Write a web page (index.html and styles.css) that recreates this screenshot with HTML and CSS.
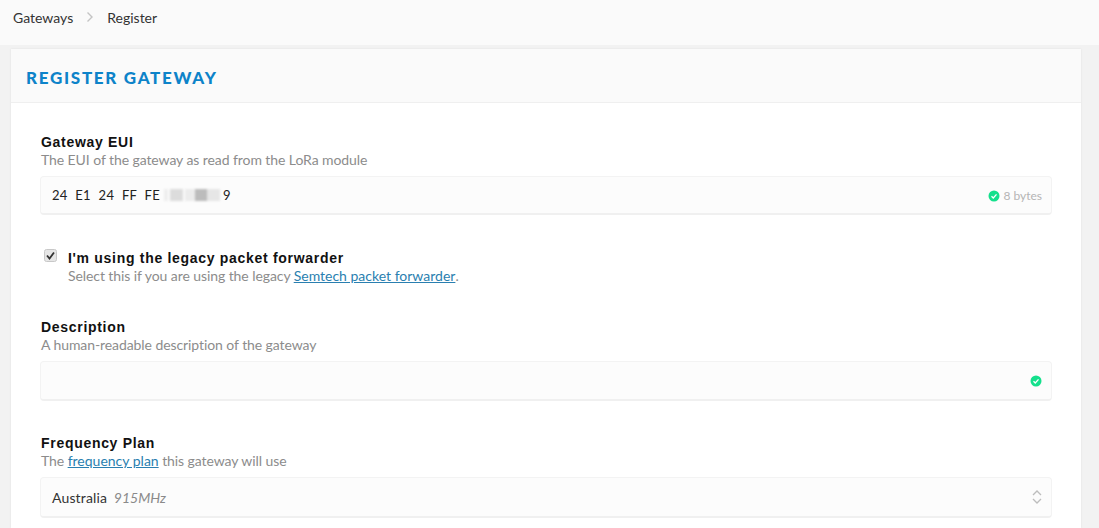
FILE: index.html
```html
<!DOCTYPE html>
<html lang="en">
<head>
    <meta charset="UTF-8">
    <meta name="viewport" content="width=device-width, initial-scale=1.0">
    <title>Register Gateway</title>
    <link rel="stylesheet" href="styles.css">
</head>
<body>

    <nav class="breadcrumbs">
        <span>Gateways</span>
        <svg class="crumb-sep" width="8" height="12" viewBox="0 0 8 12"><path d="M1.5 1.5 6 6l-4.500 4.500" fill="none" stroke="#c4c4c4" stroke-width="1.400"/></svg>
        <span>Register</span>
    </nav>

    <main class="card">
        <header class="card-header">
            <h1>Register Gateway</h1>
        </header>

        <form class="card-body">
            <div class="field field-eui">
                <label>Gateway EUI</label>
                <p class="hint">The EUI of the gateway as read from the LoRa module</p>
                <div class="input">
                    <span class="eui">24 E1 24 FF FE<span class="smudge"><i class="s1"></i><i class="s2"></i><i class="s3"></i><i class="s4"></i><i class="s5"></i></span>9</span>
                    <span class="status">
                        <svg class="check" width="12" height="12" viewBox="0 0 12 12"><circle cx="6" cy="6" r="5.500" fill="#14e08c"/><path d="M3.500 6.200 5.300 8l3.200-3.600" fill="none" stroke="#fff" stroke-width="1.300"/></svg>
                        <span class="bytes">8 bytes</span>
                    </span>
                </div>
            </div>

            <div class="legacy">
                <svg class="legacy-box" width="13" height="13" viewBox="0 0 13 13"><rect x="0.5" y="0.5" width="12" height="12" rx="2" fill="#e6e6e6" stroke="#c8c8c8"/><path d="M3 6.500 5.500 9.500 10 3.500" fill="none" stroke="#333" stroke-width="1.800"/></svg>
                <div>
                    <label>I'm using the legacy packet forwarder</label>
                    <p class="hint">Select this if you are using the legacy <a href="#">Semtech packet forwarder</a>.</p>
                </div>
            </div>

            <div class="field field-desc">
                <label>Description</label>
                <p class="hint">A human-readable description of the gateway</p>
                <div class="input input-desc">
                    <span></span>
                    <svg class="check" width="12" height="12" viewBox="0 0 12 12"><circle cx="6" cy="6" r="5.500" fill="#14e08c"/><path d="M3.500 6.200 5.300 8l3.200-3.600" fill="none" stroke="#fff" stroke-width="1.300"/></svg>
                </div>
            </div>

            <div class="field field-plan">
                <label>Frequency Plan</label>
                <p class="hint">The <a href="#">frequency plan</a> this gateway will use</p>
                <div class="input input-plan">
                    <span class="plan">Australia <em>915MHz</em></span>
                    <svg class="arrows" width="10" height="16" viewBox="0 0 10 16"><path d="M1 6 5 2l4 4M1 10l4 4 4-4" fill="none" stroke="#bdbdbd" stroke-width="1.300"/></svg>
                </div>
            </div>
        </form>
    </main>

</body>
</html>
```

FILE: styles.css
```css
html, body {
    height: 528px;
    overflow: hidden;
}
body {
    margin: 0;
    background-color: #f2f2f2;
    font-family: Lato, sans-serif;
    color: #333;
}
.breadcrumbs {
    display: flex;
    align-items: center;
    height: 45px;
    padding: 0 0 11px 13px;
    box-sizing: border-box;
    background-color: #fafafa;
    font-size: 14px;
    color: #333;
}
.crumb-sep {
    margin: 0 13px;
}
.card {
    margin: 4px 18px 0 11px;
    background-color: white;
    height: 479px;
    box-shadow: 0 0 2px rgba(0, 0, 0, 0.08);
}
.card-header {
    height: 54px;
    box-sizing: border-box;
    padding-left: 15px;
    display: flex;
    align-items: center;
    background-color: #fafafa;
    border-bottom: 1px solid #efefef;
}
h1 {
    margin: 3px 0 0;
    font-size: 17px;
    font-weight: 900;
    letter-spacing: 1.700px;
    text-transform: uppercase;
    color: #0d83c9;
}
.card-body {
    padding: 0 29px;
}
label {
    display: block;
    font-family: "Liberation Sans", Arial, sans-serif;
    font-weight: bold;
    font-size: 14px;
    line-height: 18px;
    letter-spacing: 0.700px;
    color: #111;
}
.hint {
    margin: 0;
    font-size: 14px;
    line-height: 18px;
    letter-spacing: -0.080px;
    color: #8c8c8c;
}
.hint a {
    color: #2a7fb0;
    letter-spacing: 0;
    text-decoration: underline;
}
.field label,
.field .hint {
    margin-left: 1px;
}
.field-eui {
    padding-top: 30px;
}
.field-desc {
    padding-top: 33px;
}
.field-plan {
    padding-top: 33px;
}
.input {
    display: flex;
    align-items: center;
    justify-content: space-between;
    height: 39px;
    margin-top: 7px;
    padding: 0 9px 0 11px;
    box-sizing: border-box;
    background-color: #fcfcfc;
    border: 1px solid #f3f3f3;
    border-bottom: 2px solid #f0f0f0;
    border-radius: 4px;
    font-size: 13px;
}
.input-desc {
    height: 40px;
}
.input-plan {
    height: 41px;
}
.eui {
    display: flex;
    align-items: center;
    word-spacing: 4px;
    color: #222;
    letter-spacing: 0.300px;
}
.smudge {
    display: flex;
    align-items: center;
    width: 63px;
    height: 13px;
    filter: blur(1px);
}
.smudge i {
    display: block;
    height: 12px;
}
.s1 { width: 4px; margin-left: 4px; background-color: #eeeeee; }
.s2 { width: 13px; margin-left: 2px; background-color: #dcdcdc; }
.s3 { width: 10px; margin-left: 2px; background-color: #ececec; }
.s4 { width: 12px; background-color: #bcbcbc; }
.s5 { width: 13px; background-color: #e6e6e6; }
.status {
    display: flex;
    align-items: center;
    gap: 3px;
}
.bytes {
    font-size: 12px;
    color: #b5b5b5;
}
.check {
    display: block;
    margin-top: 1px;
}
.legacy {
    display: flex;
    align-items: flex-start;
    padding-top: 34px;
}
.legacy-box {
    flex: none;
    margin: 0 11px 0 4px;
}
.plan {
    font-size: 14px;
    letter-spacing: 0.150px;
    color: #333;
}
.plan em {
    margin-left: 3px;
    font-style: italic;
    letter-spacing: 0;
    color: #8a8a8a;
}
```
